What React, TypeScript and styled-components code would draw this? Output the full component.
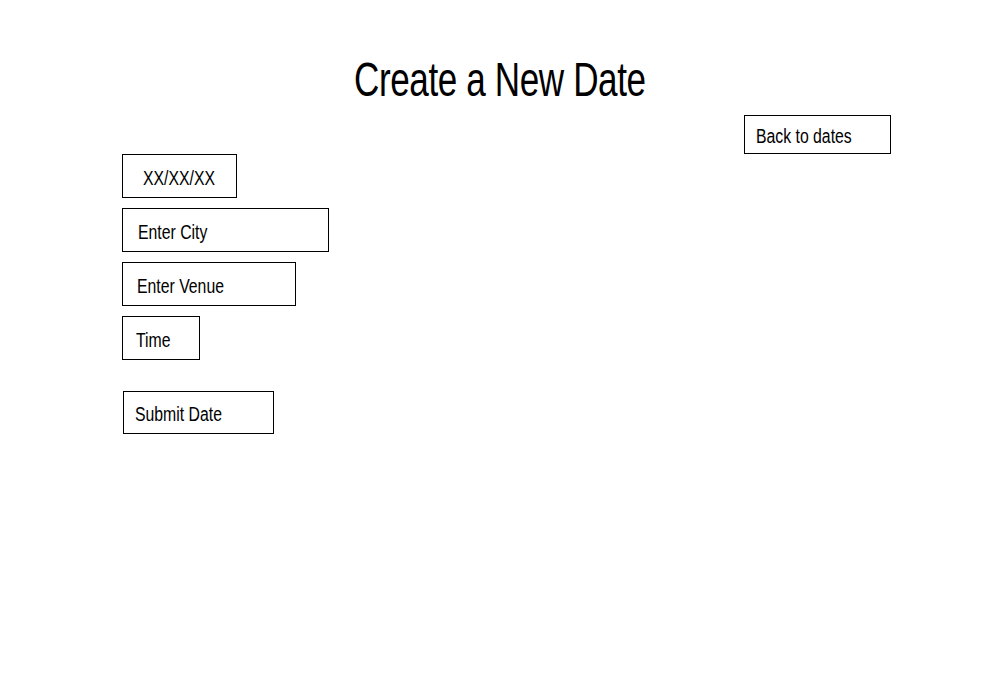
import React from "react";
import styled, { createGlobalStyle } from "styled-components";

const Global = createGlobalStyle`
  html, body { margin: 0; padding: 0; background: #fff; }
  body { font-family: "Liberation Sans", Arial, sans-serif; color: #000; }
`;

const Page = styled.div`
  width: 1000px;
  height: 700px;
  display: flex;
  flex-direction: column;
  box-sizing: border-box;
  padding-top: 52px;
`;

const Title = styled.h1`
  margin: 0;
  text-align: center;
  font-weight: 400;
  font-size: 48px;
  line-height: 56px;
  letter-spacing: -0.5px;
`;

const Narrow = styled.span<{ $scale: number; $origin?: string }>`
  display: inline-block;
  white-space: nowrap;
  transform: scaleX(${(p) => p.$scale});
  transform-origin: ${(p) => p.$origin ?? "left center"};
`;

const TopBar = styled.div`
  display: flex;
  justify-content: flex-end;
  padding-right: 109px;
  margin-top: 7px;
`;

const Form = styled.div`
  display: flex;
  flex-direction: column;
  align-items: flex-start;
  gap: 10px;
  padding-left: 122px;
`;

const Box = styled.div<{ $w: number; $h?: number; $pl: number }>`
  box-sizing: border-box;
  width: ${(p) => p.$w}px;
  height: ${(p) => p.$h ?? 44}px;
  border: 1px solid #000;
  padding-left: ${(p) => p.$pl}px;
  display: flex;
  align-items: center;
  padding-top: 4px;
  font-size: 20px;
  overflow: hidden;
`;

const SubmitWrap = styled.div`
  margin-top: 21px;
  padding-left: 1px;
`;

const Label = ({ children }: { children: React.ReactNode }) => (
  <Narrow $scale={0.79}>{children}</Narrow>
);

export default function App() {
  return (
    <>
      <Global />
      <Page>
        <Title>
          <Narrow $scale={0.73} $origin="center center">Create a New Date</Narrow>
        </Title>
        <TopBar>
          <Box $w={147} $h={39} $pl={11}><Label>Back to dates</Label></Box>
        </TopBar>
        <Form>
          <Box $w={115} $pl={20}><Label>XX/XX/XX</Label></Box>
          <Box $w={207} $pl={15}><Label>Enter City</Label></Box>
          <Box $w={174} $pl={14}><Label>Enter Venue</Label></Box>
          <Box $w={78} $pl={13}><Label>Time</Label></Box>
          <SubmitWrap>
            <Box $w={151} $h={43} $pl={11}><Label>Submit Date</Label></Box>
          </SubmitWrap>
        </Form>
      </Page>
    </>
  );
}
